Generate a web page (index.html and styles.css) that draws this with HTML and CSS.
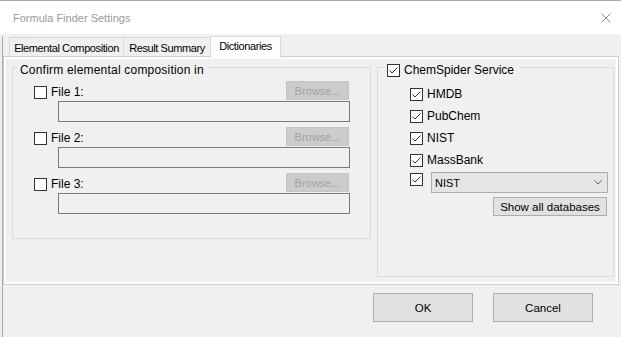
FILE: index.html
```html
<!DOCTYPE html>
<html>
<head>
<meta charset="utf-8">
<link rel="stylesheet" href="styles.css">
</head>
<body>
<div class="titlebar">
  <span class="title">Formula Finder Settings</span>
  <svg class="close" width="10" height="10" viewBox="0 0 10 10"><path d="M0.5 0.5 L9.5 9.5 M9.5 0.5 L0.5 9.5" stroke="#8a8a8a" stroke-width="1" fill="none"/></svg>
</div>
<div class="dialog">
  <div class="tabstrip">
    <div class="tab tab-1">Elemental Composition</div>
    <div class="tab tab-2">Result Summary</div>
    <div class="tab tab-3 active">Dictionaries</div>
  </div>
  <div class="tabpage">
    <div class="group group-files">
      <div class="group-title">Confirm elemental composition in</div>
      <div class="file-block">
        <div class="file-head">
          <label class="check"><svg class="box" width="13" height="13" viewBox="0 0 13 13"><rect x="0.5" y="0.5" width="12" height="12" fill="#fff" stroke="#333"/></svg><span>File 1:</span></label>
          <button class="browse" disabled>Browse...</button>
        </div>
        <div class="textbox"></div>
      </div>
      <div class="file-block">
        <div class="file-head">
          <label class="check"><svg class="box" width="13" height="13" viewBox="0 0 13 13"><rect x="0.5" y="0.5" width="12" height="12" fill="#fff" stroke="#333"/></svg><span>File 2:</span></label>
          <button class="browse" disabled>Browse...</button>
        </div>
        <div class="textbox"></div>
      </div>
      <div class="file-block">
        <div class="file-head">
          <label class="check"><svg class="box" width="13" height="13" viewBox="0 0 13 13"><rect x="0.5" y="0.5" width="12" height="12" fill="#fff" stroke="#333"/></svg><span>File 3:</span></label>
          <button class="browse" disabled>Browse...</button>
        </div>
        <div class="textbox"></div>
      </div>
    </div>
    <div class="group group-dbs">
      <div class="group-title db-title">
        <svg class="box" width="13" height="13" viewBox="0 0 13 13"><rect x="0.5" y="0.5" width="12" height="12" fill="#fff" stroke="#333"/><polyline points="2.5,6.5 5,9 10.5,3.5" fill="none" stroke="#333" stroke-width="1"/></svg>
        <span>ChemSpider Service</span>
      </div>
      <ul class="db-list">
        <li class="db-row"><svg class="box" width="13" height="13" viewBox="0 0 13 13"><rect x="0.5" y="0.5" width="12" height="12" fill="#fff" stroke="#333"/><polyline points="2.5,6.5 5,9 10.5,3.5" fill="none" stroke="#333" stroke-width="1"/></svg><span>HMDB</span></li>
        <li class="db-row"><svg class="box" width="13" height="13" viewBox="0 0 13 13"><rect x="0.5" y="0.5" width="12" height="12" fill="#fff" stroke="#333"/><polyline points="2.5,6.5 5,9 10.5,3.5" fill="none" stroke="#333" stroke-width="1"/></svg><span>PubChem</span></li>
        <li class="db-row"><svg class="box" width="13" height="13" viewBox="0 0 13 13"><rect x="0.5" y="0.5" width="12" height="12" fill="#fff" stroke="#333"/><polyline points="2.5,6.5 5,9 10.5,3.5" fill="none" stroke="#333" stroke-width="1"/></svg><span>NIST</span></li>
        <li class="db-row"><svg class="box" width="13" height="13" viewBox="0 0 13 13"><rect x="0.5" y="0.5" width="12" height="12" fill="#fff" stroke="#333"/><polyline points="2.5,6.5 5,9 10.5,3.5" fill="none" stroke="#333" stroke-width="1"/></svg><span>MassBank</span></li>
      </ul>
      <div class="combo-row">
        <svg class="box combo-check" width="13" height="13" viewBox="0 0 13 13"><rect x="0.5" y="0.5" width="12" height="12" fill="#fff" stroke="#333"/><polyline points="2.5,6.5 5,9 10.5,3.5" fill="none" stroke="#333" stroke-width="1"/></svg>
        <div class="combo"><span>NIST</span><svg width="8" height="5" viewBox="0 0 8 5"><polyline points="0.5,0.5 4,4 7.5,0.5" fill="none" stroke="#606060" stroke-width="1"/></svg></div>
      </div>
      <button class="show-all">Show all databases</button>
    </div>
  </div>
  <div class="footer">
    <button class="btn">OK</button>
    <button class="btn">Cancel</button>
  </div>
</div>
</body>
</html>
```

FILE: styles.css
```css
* { box-sizing: border-box; }
html, body {
  margin: 0;
  padding: 0;
  background: #f0f0f0;
  font-family: "Liberation Sans", Arial, sans-serif;
  color: #000;
  width: 621px;
  height: 337px;
  overflow: hidden;
}
.titlebar {
  height: 34px;
  background: #fff;
  border-top: 1px solid #a8a8a8;
  display: flex;
  align-items: center;
  justify-content: space-between;
  padding: 0 10px 0 13px;
}
.title {
  font-size: 11px;
  color: #999;
}
.close { display: block; }

.dialog {
  margin-left: 2px;
  border-left: 1px solid #a9a9a9;
  height: 303px;
}
.tabstrip {
  display: flex;
  align-items: flex-end;
  height: 20px;
  margin-top: 2px;
  padding-left: 6px;
}
.tab {
  height: 19px;
  border: 1px solid #d9d9d9;
  border-bottom: none;
  margin-right: -1px;
  background: #f0f0f0;
  font-size: 11px;
  letter-spacing: -0.4px;
  line-height: 14px;
  padding-top: 3px;
  text-align: center;
  white-space: nowrap;
}
.tab-1 { width: 115px; }
.tab-2 { width: 88px; }
.tab-3 { width: 71px; }
.tab.active {
  position: relative;
  z-index: 1;
  height: 22px;
  margin-bottom: -2px;
  background: #fff;
  padding-top: 2px;
}
.tabpage {
  width: 616px;
  height: 229px;
  border: 1px solid #cfcfcf;
  box-shadow: inset 0 0 0 2px #fff;
  display: grid;
  grid-template-columns: 359px 237px;
  column-gap: 6px;
  align-items: start;
  padding: 10px 4px 0 8px;
}
.group {
  border: 1px solid #dcdcdc;
}
.group-files {
  height: 172px;
  padding: 0 20px 0 21px;
}
.group-dbs {
  height: 210px;
  padding: 0 5px 0 0;
  display: flex;
  flex-direction: column;
}
.group-title {
  margin-top: -5px;
  height: 14px;
  line-height: 14px;
  background: #f0f0f0;
  align-self: flex-start;
  width: max-content;
  white-space: nowrap;
}
.group-files .group-title {
  margin-left: -16px;
  padding: 0 4px 0 2px;
  font-size: 12px;
  letter-spacing: 0.2px;
}
.db-title {
  margin-left: 7px;
  padding: 0 6px 0 2px;
  display: flex;
  align-items: center;
  gap: 4px;
  font-size: 12px;
}
.box { display: block; flex: none; }

.file-block { margin-top: 4px; }
.file-block + .file-block { margin-top: 5px; }
.file-head {
  display: flex;
  justify-content: space-between;
  align-items: flex-start;
  height: 20px;
}
.check {
  display: flex;
  align-items: center;
  gap: 4px;
  margin-top: 5px;
  font-size: 12px;
  line-height: 13px;
}
.browse {
  width: 63px;
  height: 19px;
  margin: 0 1px 0 0;
  padding: 0;
  border: 1px solid #c4c4c4;
  background: #cccccc;
  color: #a2a2a2;
  font-family: inherit;
  font-size: 11px;
}
.textbox {
  margin-left: 24px;
  width: 292px;
  height: 21px;
  border: 1px solid #7a7a7a;
  background: #f0f0f0;
}

.db-list {
  list-style: none;
  margin: 6px 0 0 0;
  padding: 0 0 0 32px;
}
.db-row {
  height: 22px;
  display: flex;
  align-items: center;
  gap: 4px;
  font-size: 12px;
}
.combo-row {
  display: flex;
  align-items: flex-start;
  margin-top: 1px;
  padding-left: 32px;
}
.combo-check { margin-top: 1px; }
.combo {
  margin-left: 8px;
  width: 177px;
  height: 21px;
  border: 1px solid #acacac;
  background: #e5e5e5;
  display: flex;
  align-items: center;
  justify-content: space-between;
  padding: 0 5px 0 3px;
  font-size: 11px;
}
.combo svg { display: block; }
.show-all {
  align-self: flex-end;
  margin: 4px 1px 0 0;
  width: 114px;
  height: 19px;
  padding: 0;
  border: 1px solid #adadad;
  background: #e1e1e1;
  font-family: inherit;
  font-size: 11.5px;
  color: #000;
}
.footer {
  display: flex;
  justify-content: flex-end;
  gap: 20px;
  margin-top: 8px;
  padding-right: 28px;
}
.btn {
  width: 100px;
  height: 29px;
  margin: 0;
  padding: 0;
  border: 1px solid #adadad;
  background: #e1e1e1;
  font-family: inherit;
  font-size: 11.5px;
  color: #000;
}
```
